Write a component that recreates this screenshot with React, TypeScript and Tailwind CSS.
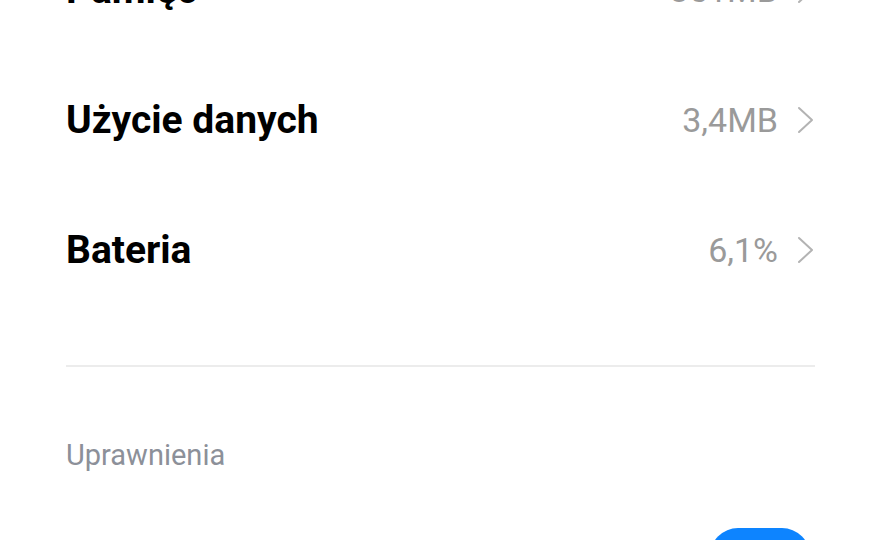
const rows = [
  { label: 'Pamięć', value: '351MB' },
  { label: 'Użycie danych', value: '3,4MB' },
  { label: 'Bateria', value: '6,1%' },
];

function Chevron() {
  return (
    <svg width="18" height="28" viewBox="0 0 18 28" className="text-[#b3b3b3]">
      <polyline
        points="2,2 15,14 2,26"
        fill="none"
        stroke="currentColor"
        strokeWidth="2"
        strokeLinecap="round"
        strokeLinejoin="round"
      />
    </svg>
  );
}

function Row({ label, value }: { label: string; value: string }) {
  return (
    <div className="flex h-[130px] items-center justify-between">
      <span className="text-[39px] font-bold text-black">{label}</span>
      <div className="flex items-center gap-[19px]">
        <span className="text-[34px] text-[#9a9a9a]">{value}</span>
        <Chevron />
      </div>
    </div>
  );
}

export default function App() {
  return (
    <div
      className="h-[540px] w-[880px] overflow-hidden bg-white"
      style={{ fontFamily: 'Roboto, "Noto Sans", sans-serif' }}
    >
      <div className="-mt-[75px] flex flex-col pl-[66px] pr-[65px]">
        {rows.map((r) => (
          <Row key={r.label} {...r} />
        ))}
        <div className="mt-[50px] h-[2px] bg-[#ececec]" />
        <div className="pt-[66px] pb-[51px]">
          <span className="block text-[29px] leading-[44px] text-[#8c9099]">Uprawnienia</span>
        </div>
        <div className="flex items-start justify-end">
          <div className="mr-[5px] h-[56px] w-[100px] rounded-full bg-[#0d84ff]" />
        </div>
      </div>
    </div>
  );
}
